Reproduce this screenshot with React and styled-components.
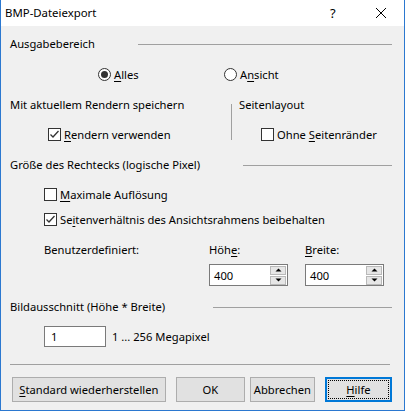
import React from 'react';
import styled, {createGlobalStyle} from 'styled-components';

const GlobalStyle = createGlobalStyle`
    html, body {
        margin: 0;
        padding: 0;
        background: #ffffff;
    }
    * {
        box-sizing: border-box;
    }
`

const Window = styled.div`
    width: 405px;
    height: 411px;
    border: 1px solid #2b78d0;
    border-top: none;
    display: flex;
    flex-direction: column;
    font-family: "Noto Sans", "Liberation Sans", sans-serif;
    font-size: 11.2px;
    color: #000;
    background: #f0f0f0;
`

const TitleBar = styled.div`
    height: 26px;
    background: #fff;
    display: flex;
    align-items: center;
    padding-left: 4px;
    padding-bottom: 1px;
    font-size: 11.4px;

    .title {
        flex: 1;
    }
    .help {
        width: 12px;
        font-size: 13px;
        margin-right: 33px;
    }
    .close {
        width: 12px;
        height: 12px;
        margin-right: 17px;
        display: flex;
    }
`

const Body = styled.div`
    flex: 1;
    display: flex;
    flex-direction: column;
    padding: 7px 12px 0 9px;
`

const Row = styled.div`
    display: flex;
    align-items: center;
    height: ${p => p.h || 20}px;
    margin-top: ${p => p.mt || 0}px;
    padding-left: ${p => p.indent || 0}px;
`

const SectionTitle = styled(Row)`
    .line {
        flex: 1;
        height: 1px;
        background: #a0a0a0;
        margin-left: ${p => p.gap}px;
        margin-top: 2px;
    }
`

const Option = styled.label`
    display: flex;
    align-items: center;
    width: ${p => p.w ? p.w + 'px' : 'auto'};
    white-space: nowrap;
`

const RadioMark = styled.span`
    width: 13px;
    height: 13px;
    border-radius: 50%;
    border: 1px solid #333;
    background: #fff;
    display: flex;
    align-items: center;
    justify-content: center;
    margin-right: 3px;

    &::after {
        content: '';
        width: 7px;
        height: 7px;
        border-radius: 50%;
        background: ${p => p.on ? '#333' : 'transparent'};
    }
`

const BoxMark = styled.span`
    width: 13px;
    height: 13px;
    border: 1px solid #333;
    background: #fff;
    display: flex;
    align-items: center;
    justify-content: center;
    margin-right: 3px;
`

const U = styled.span`
    text-decoration: underline;
    text-underline-offset: 2px;
`

const Columns = styled.div`
    display: flex;
    margin-top: 10px;
    height: 50px;

    .left {
        width: 221px;
        display: flex;
        flex-direction: column;
    }
    .divider {
        width: 1px;
        background: #a0a0a0;
        margin: 10px 0 4px;
    }
    .right {
        flex: 1;
        display: flex;
        flex-direction: column;
        padding-left: 7px;
    }
`

const SizeGrid = styled.div`
    display: grid;
    grid-template-columns: 165px 96px 80px;
    grid-template-rows: 20px 22px;
    row-gap: 5px;
    padding-left: 34px;
    margin-top: 10px;
    align-items: center;
`

const Spinner = styled.div`
    width: 79px;
    height: 22px;
    border: 1px solid #7a7a7a;
    background: #fff;
    display: flex;
    align-items: center;
    padding: 0 1px 0 4px;

    .value {
        flex: 1;
        padding-top: 1px;
    }
    .buttons {
        display: flex;
        flex-direction: column;
        gap: 1px;
    }
`

const SpinButton = styled.div`
    width: 16px;
    height: 9px;
    background: #e6e6e6;
    border: 1px solid #b9b9b9;
    display: flex;
    align-items: center;
    justify-content: center;
`

const TextField = styled.div`
    width: 62px;
    height: 21px;
    border: 1px solid #7a7a7a;
    background: #fff;
    padding-left: 6px;
    display: flex;
    align-items: center;
    margin-right: 6px;
`

const Separator = styled.div`
    height: 1px;
    background: #a0a0a0;
    margin: 17px 2px 0 0;
`

const ButtonBar = styled.div`
    display: flex;
    margin-top: 12px;
    padding-left: 2px;
`

const Button = styled.div`
    width: ${p => p.w}px;
    height: 25px;
    margin-left: ${p => p.ml || 0}px;
    background: #e1e1e1;
    border: ${p => p.focus ? '2px solid #0078d7' : '1px solid #adadad'};
    display: flex;
    align-items: center;
    justify-content: center;
    padding: ${p => p.focus ? '1px' : '0'};
    white-space: nowrap;

    .focus {
        width: 100%;
        height: 100%;
        border: 1px dotted #000;
        display: flex;
        align-items: center;
        justify-content: center;
    }
`

const Check = () => (
    <svg width="11" height="11" viewBox="0 0 11 11">
        <polyline points="1.5,5.5 4,8 9.5,2" fill="none" stroke="#333" strokeWidth="1.3" />
    </svg>
)

const Arrow = ({down}) => (
    <svg width="7" height="4" viewBox="0 0 7 4">
        <polygon points={down ? '0.5,0.5 6.5,0.5 3.5,3.5' : '0.5,3.5 6.5,3.5 3.5,0.5'} fill="#000" />
    </svg>
)

function NumberBox({value}) {
    return (
        <Spinner>
            <span className="value">{value}</span>
            <div className="buttons">
                <SpinButton><Arrow /></SpinButton>
                <SpinButton><Arrow down /></SpinButton>
            </div>
        </Spinner>
    )
}

export default function App() {
    return (
        <>
            <GlobalStyle />
            <Window>
                <TitleBar>
                    <span className="title">BMP-Dateiexport</span>
                    <span className="help">?</span>
                    <span className="close">
                        <svg width="12" height="12" viewBox="0 0 12 12">
                            <path d="M1 1 L11 11 M11 1 L1 11" stroke="#000" strokeWidth="1" />
                        </svg>
                    </span>
                </TitleBar>
                <Body>
                    <SectionTitle gap={43}>
                        <span>Ausgabebereich</span>
                        <div className="line" />
                    </SectionTitle>
                    <Row mt={11} indent={88}>
                        <Option w={126}><RadioMark on /><span><U>A</U>lles</span></Option>
                        <Option><RadioMark /><span>A<U>n</U>sicht</span></Option>
                    </Row>
                    <Columns>
                        <div className="left">
                            <Row>Mit aktuellem Rendern speichern</Row>
                            <Row mt={10} indent={38}>
                                <Option><BoxMark><Check /></BoxMark><span><U>R</U>endern verwenden</span></Option>
                            </Row>
                        </div>
                        <div className="divider" />
                        <div className="right">
                            <Row>Seitenlayout</Row>
                            <Row mt={10} indent={22}>
                                <Option><BoxMark /><span>Ohne <U>S</U>eitenränder</span></Option>
                            </Row>
                        </div>
                    </Columns>
                    <SectionTitle mt={10} gap={43}>
                        <span>Größe des Rechtecks (logische Pixel)</span>
                        <div className="line" />
                    </SectionTitle>
                    <Row mt={10} indent={34}>
                        <Option><BoxMark /><span><U>M</U>aximale Auflösung</span></Option>
                    </Row>
                    <Row mt={5} indent={34}>
                        <Option><BoxMark><Check /></BoxMark><span>Se<U>i</U>tenverhältnis des Ansichtsrahmens beibehalten</span></Option>
                    </Row>
                    <SizeGrid>
                        <span>Benutzerdefiniert:</span>
                        <span>Höh<U>e</U>:</span>
                        <span><U>B</U>reite:</span>
                        <span />
                        <NumberBox value="400" />
                        <NumberBox value="400" />
                    </SizeGrid>
                    <SectionTitle mt={10} gap={48}>
                        <span>Bildausschnitt (Höhe * Breite)</span>
                        <div className="line" />
                    </SectionTitle>
                    <Row mt={10} indent={34} h={21}>
                        <TextField>1</TextField>
                        <span>1 ... 256 Megapixel</span>
                    </Row>
                    <Separator />
                    <ButtonBar>
                        <Button w={156}><span><U>S</U>tandard wiederherstellen</span></Button>
                        <Button w={70} ml={10}>OK</Button>
                        <Button w={66} ml={5}>Abbrechen</Button>
                        <Button w={68} ml={10} focus><div className="focus"><span><U>H</U>ilfe</span></div></Button>
                    </ButtonBar>
                </Body>
            </Window>
        </>
    )
}
